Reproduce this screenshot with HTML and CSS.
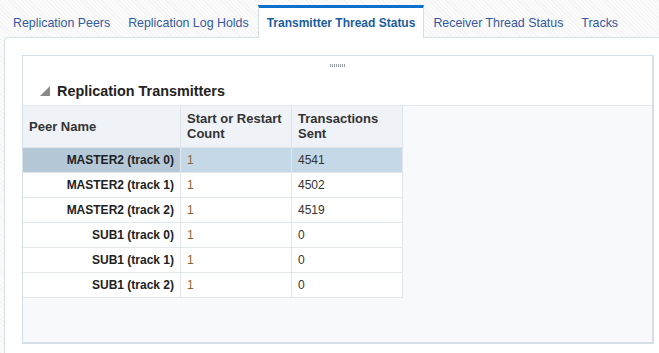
FILE: index.html
```html
<!DOCTYPE html>
<html>
<head>
<meta charset="utf-8">
<link rel="stylesheet" href="styles.css">
</head>
<body>
<div class="page">
  <div class="tabs">
    <div class="tab">Replication Peers</div>
    <div class="tab">Replication Log Holds</div>
    <div class="tab active">Transmitter Thread Status</div>
    <div class="tab">Receiver Thread Status</div>
    <div class="tab">Tracks</div>
  </div>
  <div class="panel">
    <div class="box">
      <div class="box-head">
        <div class="grip"></div>
        <div class="title-row">
          <svg class="disclose" width="10" height="10" viewBox="0 0 10 10"><polygon points="10,0 10,10 0,10" fill="#8a8a8a"/></svg>
          <span class="title">Replication Transmitters</span>
        </div>
      </div>
      <div class="table-area">
        <table class="grid">
          <thead>
            <tr>
              <th class="c1">Peer Name</th>
              <th class="c2">Start or Restart<br>Count</th>
              <th class="c3">Transactions<br>Sent</th>
            </tr>
          </thead>
          <tbody>
            <tr class="sel"><td class="c1">MASTER2 (track 0)</td><td class="c2 num1">1</td><td class="c3">4541</td></tr>
            <tr><td class="c1">MASTER2 (track 1)</td><td class="c2 num1">1</td><td class="c3">4502</td></tr>
            <tr><td class="c1">MASTER2 (track 2)</td><td class="c2 num1">1</td><td class="c3">4519</td></tr>
            <tr><td class="c1">SUB1 (track 0)</td><td class="c2 num1">1</td><td class="c3">0</td></tr>
            <tr><td class="c1">SUB1 (track 1)</td><td class="c2 num1">1</td><td class="c3">0</td></tr>
            <tr><td class="c1">SUB1 (track 2)</td><td class="c2 num1">1</td><td class="c3">0</td></tr>
          </tbody>
        </table>
      </div>
    </div>
  </div>
</div>
</body>
</html>
```
FILE: styles.css
```css
html, body {
  margin: 0;
  padding: 0;
}
body {
  width: 659px;
  height: 353px;
  overflow: hidden;
  font-family: "Liberation Sans", Arial, sans-serif;
  background: repeating-linear-gradient(45deg, #f4f4f4 0 1px, #fbfbfb 1px 3px);
}
.page {
  display: flex;
  flex-direction: column;
  height: 353px;
}
.tabs {
  display: flex;
  align-items: flex-end;
  height: 37px;
  padding-left: 4px;
  box-sizing: border-box;
}
.tab {
  padding: 0 9px;
  height: 32px;
  line-height: 37px;
  font-size: 12.4px;
  color: #34599f;
  box-sizing: border-box;
  white-space: nowrap;
}
.tab.active {
  background: #fff;
  border-top: 3px solid #0a72cc;
  border-left: 1px solid #d6dfe6;
  border-right: 1px solid #d6dfe6;
  padding: 0 8px;
  line-height: 31px;
  font-weight: bold;
  font-size: 12px;
  color: #1b5c9c;
  margin-bottom: -1px;
  height: 33px;
  position: relative;
  z-index: 1;
}
.panel {
  flex: 1;
  background: #fff;
  border-top: 1px solid #d6dfe6;
  border-left: 1px solid #d6dfe6;
  border-top-left-radius: 4px;
  margin-left: 4px;
  padding: 17px 5px 9px 17px;
  display: flex;
  flex-direction: column;
}
.box {
  flex: 1;
  display: flex;
  flex-direction: column;
  border: 1px solid #d6dfe6;
  border-right-width: 2px;
  border-bottom-width: 2px;
  border-left-width: 1px;
}
.box-head {
  height: 49px;
  background: #fff;
  border-bottom: 1px solid #e3e9ee;
  display: flex;
  flex-direction: column;
}
.grip {
  align-self: center;
  margin-top: 8px;
  width: 15px;
  height: 3px;
  background: repeating-linear-gradient(90deg, #9ba3ab 0 1px, transparent 1px 2px);
}
.title-row {
  display: flex;
  align-items: center;
  gap: 7px;
  margin-top: 16px;
  padding-left: 17px;
  height: 16px;
}
.disclose {
  display: block;
}
.title {
  font-size: 14.4px;
  font-weight: bold;
  color: #222;
}
.table-area {
  flex: 1;
  background: #f7f9fc;
}
.grid {
  border-collapse: collapse;
  font-size: 12px;
  color: #333;
}
.grid th {
  background: #eff2f6;
  text-align: left;
  font-weight: bold;
  font-size: 13px;
  height: 41px;
  padding: 0 6px;
  line-height: 15px;
  border-right: 1px solid #dde3e9;
  border-bottom: 1px solid #dde3e9;
  box-sizing: border-box;
}
.grid td {
  background: #fff;
  height: 24px;
  padding: 0 6px;
  border-right: 1px solid #e2e7ec;
  border-bottom: 1px solid #e2e7ec;
}
.grid .c1 { width: 145px; }
.grid .c2 { width: 98px; }
.grid .c3 { width: 98px; }
.grid td.c1 {
  text-align: right;
  font-weight: bold;
  color: #222;
}
.grid td.num1 {
  color: #8c6428;
}
.grid tr.sel td {
  background: #c5d8e7;
}
.grid tr.sel td.c1 {
  background: #b5c8d8;
}
```
